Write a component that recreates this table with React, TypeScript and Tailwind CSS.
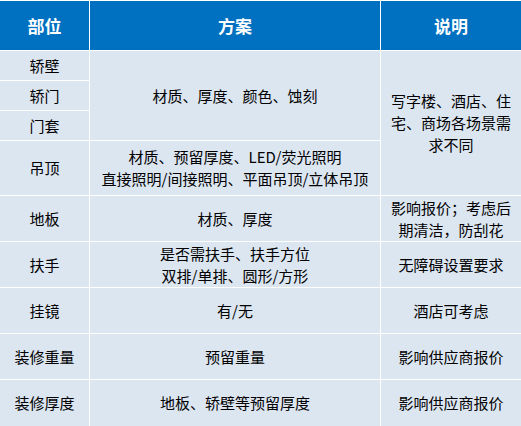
import React from 'react';

const font = { fontFamily: '"Microsoft YaHei", "Noto Sans CJK SC", sans-serif' };

function Cell({ className = '', children }: { className?: string; children: React.ReactNode }) {
  return (
    <div className={`flex items-center justify-center text-center bg-[#dce6f1] text-[15px] leading-[22px] text-black px-2 ${className}`}>
      <div>{children}</div>
    </div>
  );
}

function Head({ children }: { children: React.ReactNode }) {
  return (
    <div className="flex items-center justify-center bg-[#0070c0] text-white font-bold text-[17px]">
      {children}
    </div>
  );
}

export default function App() {
  return (
    <div className="w-[521px] h-[426px] bg-white overflow-hidden" style={font}>
      <div className="grid grid-cols-[89px_290px_140px] grid-rows-[49px_29px_29px_29px_54px_45px_45px_45px_45px_46px] gap-px bg-white pt-px">
        <Head>部位</Head>
        <Head>方案</Head>
        <Head>说明</Head>

        <Cell className="col-start-1 row-start-2">轿壁</Cell>
        <Cell className="col-start-1 row-start-3">轿门</Cell>
        <Cell className="col-start-1 row-start-4">门套</Cell>
        <Cell className="col-start-2 row-start-2 row-span-3">材质、厚度、颜色、蚀刻</Cell>
        <Cell className="col-start-3 row-start-2 row-span-4">
          写字楼、酒店、住<br />宅、商场各场景需<br />求不同
        </Cell>

        <Cell className="col-start-1 row-start-5">吊顶</Cell>
        <Cell className="col-start-2 row-start-5">
          材质、预留厚度、LED/荧光照明<br />直接照明/间接照明、平面吊顶/立体吊顶
        </Cell>

        <Cell className="col-start-1 row-start-6">地板</Cell>
        <Cell className="col-start-2 row-start-6">材质、厚度</Cell>
        <Cell className="col-start-3 row-start-6">
          影响报价；考虑后<br />期清洁，防刮花
        </Cell>

        <Cell className="col-start-1 row-start-7">扶手</Cell>
        <Cell className="col-start-2 row-start-7">
          是否需扶手、扶手方位<br />双排/单排、圆形/方形
        </Cell>
        <Cell className="col-start-3 row-start-7">无障碍设置要求</Cell>

        <Cell className="col-start-1 row-start-8">挂镜</Cell>
        <Cell className="col-start-2 row-start-8">有/无</Cell>
        <Cell className="col-start-3 row-start-8">酒店可考虑</Cell>

        <Cell className="col-start-1 row-start-9">装修重量</Cell>
        <Cell className="col-start-2 row-start-9">预留重量</Cell>
        <Cell className="col-start-3 row-start-9">影响供应商报价</Cell>

        <Cell className="col-start-1 row-start-10">装修厚度</Cell>
        <Cell className="col-start-2 row-start-10">地板、轿壁等预留厚度</Cell>
        <Cell className="col-start-3 row-start-10">影响供应商报价</Cell>
      </div>
    </div>
  );
}
